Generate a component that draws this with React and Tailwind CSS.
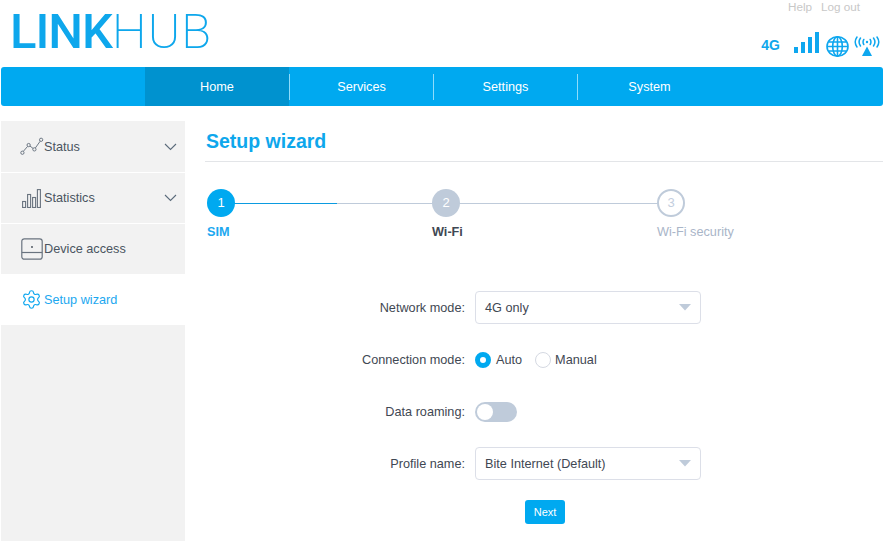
import React from "react";
import { Settings } from "lucide-react";

const Chevron = () => (
  <svg width="13" height="8" viewBox="0 0 13 8" fill="none" stroke="#5b6b7b" strokeWidth="1.1" className="ml-auto mr-[8px]">
    <path d="M1 1 6.5 6.5 12 1" />
  </svg>
);

const StatusIcon = () => (
  <svg width="25" height="19" viewBox="0 0 25 19" fill="none" stroke="#69737f" strokeWidth="1">
    <circle cx="2.5" cy="16" r="1.7" />
    <circle cx="9" cy="8" r="1.7" />
    <circle cx="15" cy="12.5" r="1.7" />
    <circle cx="22" cy="2.5" r="1.7" />
    <path d="M3.5 14.5 7.9 9.4M10.4 9 13.6 11.5M16 11 21 4" />
  </svg>
);

const StatsIcon = () => (
  <svg width="19" height="19" viewBox="0 0 19 19" fill="none" stroke="#69737f" strokeWidth="1.1">
    <rect x="0.6" y="12.5" width="3" height="6" />
    <rect x="5.6" y="5.5" width="3" height="13" />
    <rect x="10.6" y="8.5" width="3" height="10" />
    <rect x="15.4" y="0.6" width="3" height="17.9" />
  </svg>
);

const DeviceIcon = () => (
  <svg width="22" height="22" viewBox="0 0 22 22" fill="none" stroke="#69737f" strokeWidth="1.2">
    <rect x="0.8" y="0.8" width="20.4" height="20.4" rx="2.5" />
    <path d="M0.8 14.5H21.2" />
    <circle cx="11" cy="9" r="0.9" fill="#3f4853" stroke="none" />
  </svg>
);

const SideItem = ({ icon, iconClass = "", label, labelClass = "pt-[1px]", chevron, active, className = "" }) => (
  <div className={`flex items-center pl-[19px] ${active ? "bg-white text-[#1ca8f0]" : "bg-[#f2f2f2] text-[#4a5561]"} ${className}`}>
    <span className={`w-[24px] flex shrink-0 items-center ${iconClass}`}>{icon}</span>
    <span className={labelClass}>{label}</span>
    {chevron && <Chevron />}
  </div>
);

const Step = ({ n, label, state }) => {
  const circle =
    state === "current"
      ? "bg-[#00a9f0] text-white"
      : state === "next"
      ? "bg-[#bfcbda] text-white"
      : "bg-white border-2 border-[#bfcbda] text-[#c3cede]";
  const text =
    state === "current" ? "text-[#1ca8f0] font-bold" : state === "next" ? "text-[#3f4853] font-bold" : "text-[#a9b5c8]";
  return (
    <div className="flex flex-col items-start">
      <div className={`w-[28px] h-[28px] rounded-full flex items-center justify-center text-[13px] ${circle}`}>{n}</div>
      <div className={`mt-[8px] leading-[15px] whitespace-nowrap ${text}`}>{label}</div>
    </div>
  );
};

const Row = ({ label, labelClass = "pt-[1px]", children, className = "" }) => (
  <div className={`flex items-center ${className}`}>
    <div className={`w-[270px] text-right pr-[10px] text-[#3f4853] whitespace-nowrap ${labelClass}`}>{label}</div>
    {children}
  </div>
);

const Select = ({ value }) => (
  <div className="w-[226px] h-[33px] rounded-[4px] border border-[#dcdfe8] flex items-center pl-[9px] pr-[9px] text-[#3f4853]">
    <span className="pt-[2px]">{value}</span>
    <svg width="12" height="7" viewBox="0 0 12 7" className="ml-auto">
      <path d="M0 0H12L6 6.5Z" fill="#bfcbda" />
    </svg>
  </div>
);

export default function App() {
  return (
    <div className="w-[890px] h-[541px] overflow-hidden bg-white pl-[1px] pr-[7px] font-['Liberation_Sans',Arial,sans-serif] text-[12.7px]">
      <header className="h-[67px] flex relative">
        <div className="pl-[9px] pt-[4px] text-[49px] leading-[56px] text-[#0ea7ec] font-['Roboto',sans-serif] whitespace-nowrap">
          <span className="font-medium tracking-[-1px]">LINK</span>
          <span className="font-extralight tracking-[1.1px]">HUB</span>
        </div>
        <div className="ml-auto flex flex-col items-end pr-[2px]">
          <div className="mr-[21px] h-[14px] text-[11.7px] leading-[13px] text-[#c8c8c8] flex gap-[9px]">
            <span>Help</span>
            <span>Log out</span>
          </div>
          <div className="mt-[18px] flex items-end">
            <span className="text-[14px] leading-[16px] font-bold text-[#0ea7ec] mr-[14px] mb-[4px]">4G</span>
            <svg width="25" height="21" viewBox="0 0 25 21" fill="#0ea7ef" className="mr-[7px] mb-[4px]">
              <rect x="0" y="15" width="4" height="6" />
              <rect x="7" y="10" width="4" height="11" />
              <rect x="14" y="5" width="4" height="16" />
              <rect x="21" y="0" width="4" height="21" />
            </svg>
            <svg width="23" height="21" viewBox="0 0 23 21" fill="none" stroke="#0ea7ef" strokeWidth="1.6">
              <ellipse cx="11.5" cy="10.5" rx="10.5" ry="9.7" />
              <ellipse cx="11.5" cy="10.5" rx="4.8" ry="9.7" />
              <path d="M11.5 1V20M1 10.5H22M2.5 6H20.5M2.5 15H20.5" />
            </svg>
            <svg width="26" height="20" viewBox="0 0 26 20" fill="none" stroke="#0ea7ef" strokeWidth="1.5" className="ml-[5px] mr-[1px] mb-[1px]">
              <path d="M3 1C.5 4.5.5 7.5 3 11M23 1C25.5 4.5 25.5 7.5 23 11M6.5 2C4.7 4.5 4.7 7.5 6.5 10M19.5 2C21.3 4.5 21.3 7.5 19.5 10M9.8 3.5C8.9 5 8.9 7 9.8 8.5M16.2 3.5C17.1 5 17.1 7 16.2 8.5" strokeLinecap="round" />
              <circle cx="13" cy="6" r="1.2" fill="#0ea7ef" stroke="none" />
              <path d="M13 10.5 8 20H18Z" fill="#0ea7ef" stroke="none" />
            </svg>
          </div>
        </div>
      </header>

      <nav className="h-[39px] w-[882px] bg-[#00a9f0] rounded-[3px] pl-[144px] flex text-white">
        {["Home", "Services", "Settings", "System"].map((item, i) => (
          <div key={item} className={`w-[144px] relative flex items-center justify-center pt-[2px] ${i === 0 ? "bg-[#0092cf]" : "pl-[1px]"}`}>
            {item}
            {i < 3 && <span className="absolute right-[-1px] top-[7px] bottom-[6px] w-px bg-[#8fdcfb]" />}
          </div>
        ))}
      </nav>

      <div className="flex w-[882px] mt-[15px]">
        <aside className="w-[184px] h-[420px] bg-[#f2f2f2] flex flex-col shrink-0">
          <SideItem icon={<StatusIcon />} label="Status" labelClass="pt-[2px]" chevron className="h-[52px] border-b border-white" />
          <SideItem icon={<StatsIcon />} iconClass="pl-[2px]" label="Statistics" chevron className="h-[51px] border-b border-white" />
          <SideItem icon={<DeviceIcon />} iconClass="pl-[1px]" label="Device access" className="h-[50px]" />
          <SideItem icon={<Settings size={21} color="#0ea7ef" strokeWidth={1.3} />} iconClass="pl-[1px]" label="Setup wizard" labelClass="pt-[2px]" active className="h-[51px]" />
        </aside>

        <main className="flex-1 pl-[20px] min-w-0">
          <h1 className="h-[41px] border-b border-[#e3e5e8] pl-[1px] text-[19.5px] leading-[40px] font-bold text-[#0ea7ec]">Setup wizard</h1>

          <div className="mt-[27px] ml-[2px] flex items-start relative w-[478px] justify-between">
            <div className="absolute left-[20px] right-[20px] top-[14px] h-px bg-[#bfcbda]" />
            <div className="absolute left-[20px] w-[110px] top-[14px] h-px bg-[#0b9be0]" />
            <div className="relative w-[225px]"><Step n="1" label="SIM" state="current" /></div>
            <div className="relative w-[225px]"><Step n="2" label="Wi-Fi" state="next" /></div>
            <div className="relative w-[28px]"><Step n="3" label="Wi-Fi security" state="todo" /></div>
          </div>

          <div className="mt-[51px]">
            <Row label="Network mode:" labelClass="pt-[2px]">
              <Select value="4G only" />
            </Row>
            <Row label="Connection mode:" className="mt-[27px] h-[18px]">
              <span className="w-[16px] h-[16px] rounded-full border-[5px] border-[#00a9f0] bg-white" />
              <span className="ml-[5px] pt-[1px] text-[#3f4853]">Auto</span>
              <span className="ml-[13px] w-[16px] h-[16px] rounded-full border border-[#d5d9e2] bg-white" />
              <span className="ml-[4px] pt-[1px] text-[#3f4853]">Manual</span>
            </Row>
            <Row label="Data roaming:" className="mt-[33px] h-[20px]">
              <span className="w-[42px] h-[20px] rounded-full bg-[#bfcbda] p-[2px] flex">
                <span className="w-[16px] h-[16px] rounded-full bg-white" />
              </span>
            </Row>
            <Row label="Profile name:" labelClass="pt-[2px]" className="mt-[25px]">
              <Select value="Bite Internet (Default)" />
            </Row>
            <div className="mt-[20px] ml-[320px] w-[40px] h-[24px] rounded-[3px] bg-[#00a9f0] text-white text-[11px] flex items-center justify-center">Next</div>
          </div>
        </main>
      </div>
    </div>
  );
}
